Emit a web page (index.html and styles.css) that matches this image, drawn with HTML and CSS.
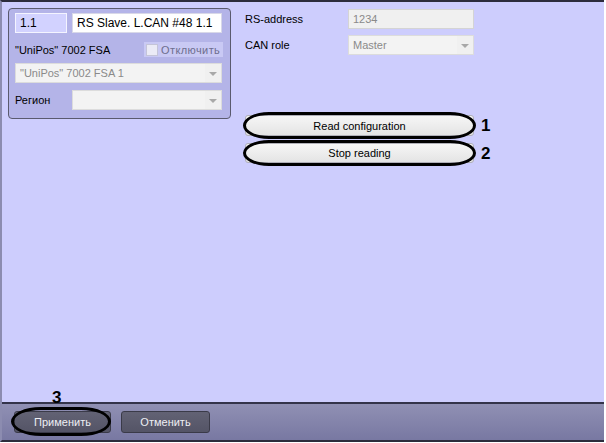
FILE: index.html
```html
<!DOCTYPE html>
<html>
<head>
<meta charset="utf-8">
<link rel="stylesheet" href="styles.css">
</head>
<body>
<div class="screen">
  <div class="main">
    <div class="panel">
      <div class="row r1">
        <div class="field num">1.1</div>
        <div class="field name">RS Slave. L.CAN #48 1.1</div>
      </div>
      <div class="row r2">
        <span class="lbl">"UniPos" 7002 FSA</span>
        <label class="chk"><span class="box"></span><span class="chk-text">Отключить</span></label>
      </div>
      <div class="row r3">
        <div class="combo wide"><span class="ctext">"UniPos" 7002 FSA 1</span><span class="arrow"></span></div>
      </div>
      <div class="row r4">
        <span class="lbl lbl-w">Регион</span>
        <div class="combo region"><span class="ctext"></span><span class="arrow"></span></div>
      </div>
    </div>
    <div class="right">
      <div class="prow">
        <span class="plbl">RS-address</span>
        <div class="field dis">1234</div>
      </div>
      <div class="prow">
        <span class="plbl">CAN role</span>
        <div class="combo dis-combo"><span class="ctext">Master</span><span class="arrow"></span></div>
      </div>
      <div class="btnwrap first">
        <button class="btn">Read configuration</button>
        <span class="ring"></span>
        <span class="mark">1</span>
      </div>
      <div class="btnwrap second">
        <button class="btn">Stop reading</button>
        <span class="ring"></span>
        <span class="mark">2</span>
      </div>
    </div>
  </div>
  <div class="footer">
    <div class="btnwrap apply">
      <button class="fbtn">Применить</button>
      <span class="ring"></span>
      <span class="mark">3</span>
    </div>
    <button class="fbtn cancel">Отменить</button>
  </div>
</div>
</body>
</html>
```
FILE: styles.css
```css
* { box-sizing: border-box; }
html, body { margin: 0; padding: 0; background: #ffffff; }
body {
  font-family: "Liberation Sans", Arial, sans-serif;
  font-size: 11px;
  color: #000;
}
.screen {
  width: 604px;
  height: 442px;
  background: #cdcdfd;
  border-top: 2px solid #2c2c3c;
  border-left: 2px solid #8c8cb0;
  border-bottom: 2px solid #2c2c3c;
  display: flex;
  flex-direction: column;
}
.main {
  flex: 1;
  display: flex;
  align-items: flex-start;
}
.panel {
  margin: 6px 0 0 6px;
  width: 223px;
  height: 111px;
  background: #b4b4e8;
  border: 1px solid #5a5a6e;
  border-radius: 4px;
  padding: 4px 7px 7px 6px;
  display: flex;
  flex-direction: column;
}
.row { display: flex; align-items: center; }
.r1 { height: 20px; gap: 5px; }
.r2 { height: 15px; margin-top: 9px; justify-content: space-between; }
.r3 { height: 20px; margin-top: 6px; }
.r4 { height: 20px; margin-top: 7px; }
.field {
  height: 20px;
  border: 1px solid #d8d8e8;
  background: #fff;
  padding: 0 4px;
  display: flex;
  align-items: center;
  white-space: nowrap;
}
.num { width: 52px; background: #d2d2ff; border-color: #f4f4ff; font-size: 12px; }
.name { width: 150px; font-size: 12px; }
.lbl { white-space: nowrap; }
.lbl-w { width: 57px; }
.chk {
  display: flex;
  align-items: center;
  height: 15px;
  width: 79px;
  background: #c9c9f4;
  padding-left: 2px;
}
.box {
  width: 12px;
  height: 12px;
  background: #ebebf6;
  border: 1px solid #c4c4d8;
  margin-right: 3px;
}
.chk-text { color: #6e6e8e; letter-spacing: 0.4px; }
.combo {
  height: 20px;
  background: #f3f3f3;
  border: 1px solid #dcdcdc;
  display: flex;
  align-items: center;
  justify-content: space-between;
  padding-left: 4px;
}
.wide { width: 207px; }
.region { width: 150px; }
.ctext { color: #8a8a8a; white-space: nowrap; }
.arrow {
  width: 16px;
  height: 18px;
  background: #f0f0f0;
  position: relative;
}
.arrow::after {
  content: "";
  position: absolute;
  left: 4px;
  top: 8px;
  border-left: 4px solid transparent;
  border-right: 4px solid transparent;
  border-top: 4px solid #a8a8a8;
}
.right {
  margin: 7px 0 0 14px;
  display: flex;
  flex-direction: column;
}
.prow { display: flex; align-items: center; height: 20px; margin-bottom: 6px; }
.plbl { width: 103px; }
.dis {
  width: 126px;
  background: #f0f0f0;
  border: 1px solid #d4d4d4;
  color: #8a8a8a;
}
.dis-combo { width: 126px; }
.btnwrap { position: relative; }
.first { margin-top: 54px; }
.second { margin-top: 7px; }
.btn {
  display: block;
  width: 229px;
  height: 21px;
  font-family: "Liberation Sans", Arial, sans-serif;
  font-size: 11px;
  color: #000;
  background: linear-gradient(#f6f6f6, #e4e4e4);
  border: 1px solid #b0b0b8;
  border-radius: 3px;
  padding: 0;
}
.second .btn { height: 20px; }
.ring {
  position: absolute;
  left: -2px;
  right: -2px;
  top: -3px;
  bottom: -3px;
  border: 3px solid #000;
  border-radius: 26px / 50%;
  pointer-events: none;
}
.mark {
  position: absolute;
  left: 236px;
  top: 2px;
  font-weight: bold;
  font-size: 17px;
  line-height: 17px;
}
.footer {
  height: 38px;
  border-top: 2px solid #34344a;
  background: linear-gradient(#9090b4, #7878a2);
  display: flex;
  align-items: center;
  gap: 10px;
  padding-left: 12px;
}
.fbtn {
  display: block;
  height: 22px;
  width: 97px;
  font-family: "Liberation Sans", Arial, sans-serif;
  font-size: 11px;
  color: #eeeef4;
  background: linear-gradient(#626274, #545466);
  border: 1px solid #3a3a48;
  border-radius: 3px;
  padding: 0;
}
.cancel { width: 89px; }
.apply .ring { left: -3px; right: 0; top: -4px; bottom: -3px; border-radius: 30px / 50%; }
.apply .mark { left: 38px; top: -22px; }
```
